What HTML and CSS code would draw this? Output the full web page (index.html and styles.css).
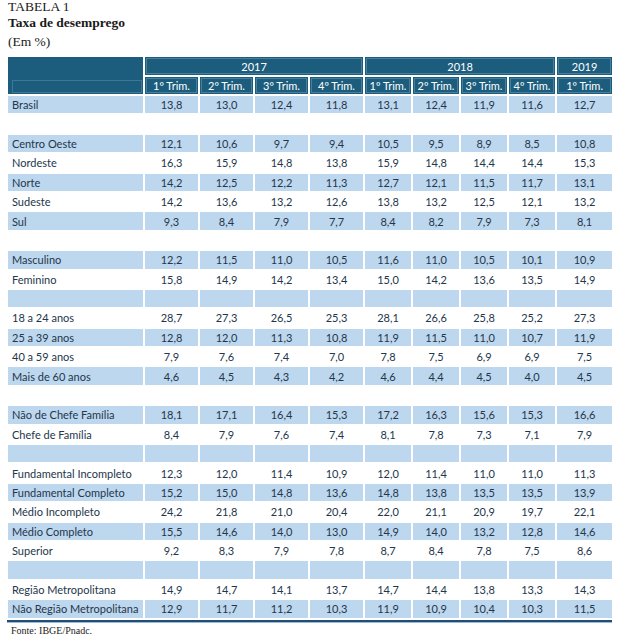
FILE: index.html
```html
<!DOCTYPE html>
<html lang="pt">
<head>
<meta charset="utf-8">
<title>Tabela 1 - Taxa de desemprego</title>
<link rel="stylesheet" href="styles.css">
</head>
<body>
<div class="page">
  <div class="t1">TABELA 1</div>
  <div class="t2">Taxa de desemprego</div>
  <div class="t3">(Em %)</div>
  <div class="frame">
    <table class="data">
      <colgroup>
        <col class="c-label"><col class="c17"><col class="c17"><col class="c17"><col class="c17"><col class="c18"><col class="c18"><col class="c18"><col class="c18"><col class="c19">
      </colgroup>
      <thead>
        <tr class="h1">
          <th rowspan="2" class="hl"><div class="hl-in"><span class="hl-top"></span><span class="hl-bot"></span></div></th>
          <th colspan="4">2017</th>
          <th colspan="4">2018</th>
          <th>2019</th>
        </tr>
        <tr class="h2">
          <th>1º Trim.</th><th>2º Trim.</th><th>3º Trim.</th><th>4º Trim.</th>
          <th>1º Trim.</th><th>2º Trim.</th><th>3º Trim.</th><th>4º Trim.</th>
          <th>1º Trim.</th>
        </tr>
      </thead>
      <tbody>
        <tr class="b"><td>Brasil</td><td>13,8</td><td>13,0</td><td>12,4</td><td>11,8</td><td>13,1</td><td>12,4</td><td>11,9</td><td>11,6</td><td>12,7</td></tr>
        <tr class="w"><td></td><td></td><td></td><td></td><td></td><td></td><td></td><td></td><td></td><td></td></tr>
        <tr class="b"><td>Centro Oeste</td><td>12,1</td><td>10,6</td><td>9,7</td><td>9,4</td><td>10,5</td><td>9,5</td><td>8,9</td><td>8,5</td><td>10,8</td></tr>
        <tr class="w"><td>Nordeste</td><td>16,3</td><td>15,9</td><td>14,8</td><td>13,8</td><td>15,9</td><td>14,8</td><td>14,4</td><td>14,4</td><td>15,3</td></tr>
        <tr class="b"><td>Norte</td><td>14,2</td><td>12,5</td><td>12,2</td><td>11,3</td><td>12,7</td><td>12,1</td><td>11,5</td><td>11,7</td><td>13,1</td></tr>
        <tr class="w"><td>Sudeste</td><td>14,2</td><td>13,6</td><td>13,2</td><td>12,6</td><td>13,8</td><td>13,2</td><td>12,5</td><td>12,1</td><td>13,2</td></tr>
        <tr class="b"><td>Sul</td><td>9,3</td><td>8,4</td><td>7,9</td><td>7,7</td><td>8,4</td><td>8,2</td><td>7,9</td><td>7,3</td><td>8,1</td></tr>
        <tr class="w"><td></td><td></td><td></td><td></td><td></td><td></td><td></td><td></td><td></td><td></td></tr>
        <tr class="b"><td>Masculino</td><td>12,2</td><td>11,5</td><td>11,0</td><td>10,5</td><td>11,6</td><td>11,0</td><td>10,5</td><td>10,1</td><td>10,9</td></tr>
        <tr class="w"><td>Feminino</td><td>15,8</td><td>14,9</td><td>14,2</td><td>13,4</td><td>15,0</td><td>14,2</td><td>13,6</td><td>13,5</td><td>14,9</td></tr>
        <tr class="b"><td></td><td></td><td></td><td></td><td></td><td></td><td></td><td></td><td></td><td></td></tr>
        <tr class="w"><td>18 a 24 anos</td><td>28,7</td><td>27,3</td><td>26,5</td><td>25,3</td><td>28,1</td><td>26,6</td><td>25,8</td><td>25,2</td><td>27,3</td></tr>
        <tr class="b"><td>25 a 39 anos</td><td>12,8</td><td>12,0</td><td>11,3</td><td>10,8</td><td>11,9</td><td>11,5</td><td>11,0</td><td>10,7</td><td>11,9</td></tr>
        <tr class="w"><td>40 a 59 anos</td><td>7,9</td><td>7,6</td><td>7,4</td><td>7,0</td><td>7,8</td><td>7,5</td><td>6,9</td><td>6,9</td><td>7,5</td></tr>
        <tr class="b"><td>Mais de 60 anos</td><td>4,6</td><td>4,5</td><td>4,3</td><td>4,2</td><td>4,6</td><td>4,4</td><td>4,5</td><td>4,0</td><td>4,5</td></tr>
        <tr class="w"><td></td><td></td><td></td><td></td><td></td><td></td><td></td><td></td><td></td><td></td></tr>
        <tr class="b"><td>Não de Chefe Família</td><td>18,1</td><td>17,1</td><td>16,4</td><td>15,3</td><td>17,2</td><td>16,3</td><td>15,6</td><td>15,3</td><td>16,6</td></tr>
        <tr class="w"><td>Chefe de Família</td><td>8,4</td><td>7,9</td><td>7,6</td><td>7,4</td><td>8,1</td><td>7,8</td><td>7,3</td><td>7,1</td><td>7,9</td></tr>
        <tr class="b"><td></td><td></td><td></td><td></td><td></td><td></td><td></td><td></td><td></td><td></td></tr>
        <tr class="w"><td>Fundamental Incompleto</td><td>12,3</td><td>12,0</td><td>11,4</td><td>10,9</td><td>12,0</td><td>11,4</td><td>11,0</td><td>11,0</td><td>11,3</td></tr>
        <tr class="b"><td>Fundamental Completo</td><td>15,2</td><td>15,0</td><td>14,8</td><td>13,6</td><td>14,8</td><td>13,8</td><td>13,5</td><td>13,5</td><td>13,9</td></tr>
        <tr class="w"><td>Médio Incompleto</td><td>24,2</td><td>21,8</td><td>21,0</td><td>20,4</td><td>22,0</td><td>21,1</td><td>20,9</td><td>19,7</td><td>22,1</td></tr>
        <tr class="b"><td>Médio Completo</td><td>15,5</td><td>14,6</td><td>14,0</td><td>13,0</td><td>14,9</td><td>14,0</td><td>13,2</td><td>12,8</td><td>14,6</td></tr>
        <tr class="w"><td>Superior</td><td>9,2</td><td>8,3</td><td>7,9</td><td>7,8</td><td>8,7</td><td>8,4</td><td>7,8</td><td>7,5</td><td>8,6</td></tr>
        <tr class="b"><td></td><td></td><td></td><td></td><td></td><td></td><td></td><td></td><td></td><td></td></tr>
        <tr class="w"><td>Região Metropolitana</td><td>14,9</td><td>14,7</td><td>14,1</td><td>13,7</td><td>14,7</td><td>14,4</td><td>13,8</td><td>13,3</td><td>14,3</td></tr>
        <tr class="b"><td>Não Região Metropolitana</td><td>12,9</td><td>11,7</td><td>11,2</td><td>10,3</td><td>11,9</td><td>10,9</td><td>10,4</td><td>10,3</td><td>11,5</td></tr>
      </tbody>
    </table>
  </div>
  <div class="source">Fonte: IBGE/Pnadc.</div>
</div>
</body>
</html>
```

FILE: styles.css
```css
html, body {
  margin: 0;
  padding: 0;
  background: #ffffff;
}

.page {
  padding-left: 8px;
  font-family: "Liberation Serif", "Times New Roman", serif;
  color: #1a1a1a;
}

.t1 {
  font-size: 13.5px;
  line-height: 13px;
}

.t2 {
  font-size: 13.5px;
  font-weight: bold;
  line-height: 20px;
}

.t3 {
  font-size: 13.5px;
  line-height: 18px;
}

.frame {
  width: 604px;
  margin-top: 4px;
  margin-left: -1px;
  padding-left: 1px;
  border-bottom: 2px solid #1f4e79;
  box-shadow: 0 1px 0 #9db7d5;
}

.data {
  width: 608px;
  margin-left: -2px;
  table-layout: fixed;
  border-collapse: separate;
  border-spacing: 2px;
  font-family: "Lato", "Liberation Sans", sans-serif;
  font-size: 11px;
  color: #24364b;
}

.c-label { width: 135px; }
.c17 { width: 53px; }
.c18 { width: 46px; }
.c19 { width: 55px; }

.data th {
  background: #1c5d7d;
  color: #ffffff;
  font-weight: normal;
  text-align: center;
  padding: 0;
  white-space: nowrap;
  box-shadow: inset 0 0 0 1px #1c5d7d, inset 0 0 0 2px rgba(190, 215, 235, 0.28);
}

.h1 th { height: 18px; }
.h2 th { height: 17px; }

.data th.hl {
  box-shadow: none;
  padding: 0;
}

.hl-in {
  display: flex;
  flex-direction: column;
  height: 37px;
}

.hl-top {
  flex: 0 0 23px;
}

.hl-bot {
  flex: 1;
  margin: 0 1px 1px 4px;
  box-shadow: inset 0 0 0 1px rgba(190, 215, 235, 0.22);
}

.data td {
  height: 17.4px;
  padding: 0;
  text-align: center;
  white-space: nowrap;
  line-height: 17px;
}

.data td:first-child {
  text-align: left;
  padding-left: 4px;
}

.data tr.b td {
  background: #bdd7ee;
}

.source {
  margin-top: 3px;
  padding-left: 3px;
  font-size: 10px;
  line-height: 12px;
  color: #222222;
}
```
